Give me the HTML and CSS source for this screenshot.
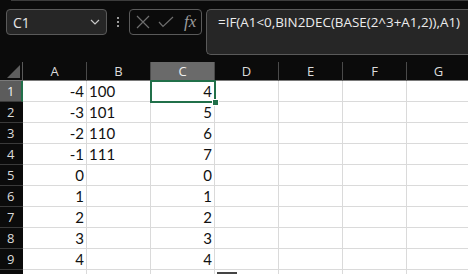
FILE: index.html
```html
<!DOCTYPE html>
<html lang="en">
<head>
  <meta charset="UTF-8" />
  <title>Sheet</title>
  <link rel="stylesheet" href="styles.css">
</head>
<body>
  <div class="toolbar">
    <div class="namebox">
      <span>C1</span>
      <svg width="10" height="6" viewBox="0 0 10 6"><path d="M1 1 L5 5 L9 1" fill="none" stroke="#c8c8c8" stroke-width="1.2"/></svg>
    </div>
    <div class="grip"><i></i><i></i><i></i></div>
    <div class="fxbox">
      <svg width="14" height="14" viewBox="0 0 14 14"><path d="M1 1 L13 13 M13 1 L1 13" stroke="#6e6e6e" stroke-width="1.2"/></svg>
      <svg width="16" height="12" viewBox="0 0 16 12"><path d="M1 6 L5 10.5 L15 1" fill="none" stroke="#6e6e6e" stroke-width="1.2"/></svg>
      <span class="fx">fx</span>
    </div>
    <div class="formula">=IF(A1&lt;0,BIN2DEC(BASE(2^3+A1,2)),A1)</div>
  </div>

  <div class="sheet">
    <div class="corner"><span></span></div>
    <div class="colhead">A</div>
    <div class="colhead">B</div>
    <div class="colhead active">C</div>
    <div class="colhead">D</div>
    <div class="colhead">E</div>
    <div class="colhead">F</div>
    <div class="colhead">G</div>
  </div>
  <div class="sheet" id="rows"></div>
  <div class="selection"><span></span></div>
  <div class="thumb"></div>

  <script>
    const rows = document.getElementById('rows');
    const colA = [-4, -3, -2, -1, 0, 1, 2, 3, 4];
    const colB = ['100', '101', '110', '111', '', '', '', '', ''];
    const colC = [4, 5, 6, 7, 0, 1, 2, 3, 4];

    for (let r = 0; r < 10; r++) {
      const head = document.createElement('div');
      head.className = 'rowhead' + (r === 0 ? ' active' : '');
      head.textContent = r < 9 ? r + 1 : '';
      rows.appendChild(head);
      const vals = [r < 9 ? colA[r] : '', r < 9 ? colB[r] : '', r < 9 ? colC[r] : '', '', '', '', ''];
      vals.forEach((v, i) => {
        const cell = document.createElement('div');
        cell.className = 'cell' + (i === 1 ? ' text' : '');
        cell.textContent = v;
        rows.appendChild(cell);
      });
    }
  </script>
</body>
</html>
```
FILE: styles.css
```css
body {
  margin: 0;
  background: #0b0b0b;
  overflow: hidden;
  position: relative;
  height: 274px;
  font-family: Lato, "Noto Sans", sans-serif;
}
.toolbar {
  display: flex;
  align-items: flex-start;
  height: 62px;
  box-sizing: border-box;
  padding: 9px 0 0 6px;
  position: relative;
}
.toolbar::before {
  content: "";
  position: absolute;
  left: 11px;
  right: 0;
  top: 0;
  border-top: 1px solid #3c3c3c;
}
.namebox {
  width: 101px;
  height: 26px;
  box-sizing: border-box;
  border: 1px solid #5a5a5a;
  border-radius: 4px;
  background: #262626;
  display: flex;
  align-items: center;
  justify-content: space-between;
  padding: 0 6px 0 6px;
  color: #e6e6e6;
  font-family: "Open Sans", sans-serif;
  font-size: 14px;
}
.grip {
  width: 22px;
  height: 26px;
  display: flex;
  flex-direction: column;
  align-items: center;
  justify-content: center;
  gap: 2px;
}
.grip i {
  width: 2px;
  height: 2px;
  background: #9a9a9a;
}
.fxbox {
  width: 73px;
  height: 26px;
  box-sizing: border-box;
  border: 1px solid #5a5a5a;
  border-radius: 4px;
  display: flex;
  align-items: center;
  gap: 8px;
  padding-left: 6px;
}
.fx {
  font-family: "Liberation Serif", serif;
  font-style: italic;
  font-size: 17px;
  color: #9c9c9c;
  margin-left: 2px;
}
.formula {
  margin-left: 4px;
  flex: 1;
  height: 46px;
  box-sizing: border-box;
  border: 1px solid #5a5a5a;
  border-right: none;
  border-radius: 5px 0 0 5px;
  background: #262626;
  color: #ececec;
  font-family: "Open Sans", sans-serif;
  font-size: 13.4px;
  padding: 3px 0 0 11px;
  white-space: nowrap;
}
.sheet {
  display: grid;
  grid-template-columns: 23px repeat(7, 64px);
}
.corner {
  height: 19px;
  border-right: 1px solid #5a5a5a;
  border-bottom: 1px solid #7a7a7a;
  box-sizing: border-box;
  position: relative;
}
.corner span {
  position: absolute;
  right: 2px;
  bottom: 2px;
  width: 0;
  height: 0;
  border-left: 13px solid transparent;
  border-bottom: 13px solid #5e5e5e;
}
.colhead {
  height: 19px;
  box-sizing: border-box;
  border-right: 1px solid #4a4a4a;
  border-bottom: 1px solid #7a7a7a;
  color: #dcdcdc;
  font-family: "Open Sans", sans-serif;
  font-size: 13px;
  text-align: center;
  line-height: 18px;
}
.colhead.active {
  background: #6a6a6a;
  color: #f0f0f0;
}
.rowhead {
  height: 21px;
  box-sizing: border-box;
  border-bottom: 1px solid #3a3a3a;
  color: #dcdcdc;
  font-family: "Open Sans", sans-serif;
  font-size: 13px;
  line-height: 20px;
  padding-left: 7px;
}
.rowhead.active {
  background: #5c5c5c;
  border-right: 2px solid #21704a;
  color: #f0f0f0;
}
.cell {
  height: 21px;
  box-sizing: border-box;
  background: #fff;
  border-right: 1px solid #dadada;
  border-bottom: 1px solid #dadada;
  color: #111;
  font-size: 15px;
  line-height: 21px;
  text-align: right;
  padding: 0 2px;
}
.cell.text {
  text-align: left;
}
.selection {
  position: absolute;
  left: 150px;
  top: 80px;
  width: 66px;
  height: 23px;
  box-sizing: border-box;
  border: 2px solid #21704a;
}
.selection span {
  position: absolute;
  right: -5px;
  bottom: -5px;
  width: 5px;
  height: 5px;
  background: #21704a;
  border: 1px solid #fff;
}
.thumb {
  position: absolute;
  left: 217px;
  top: 272px;
  width: 20px;
  height: 4px;
  background: #444;
}
```
